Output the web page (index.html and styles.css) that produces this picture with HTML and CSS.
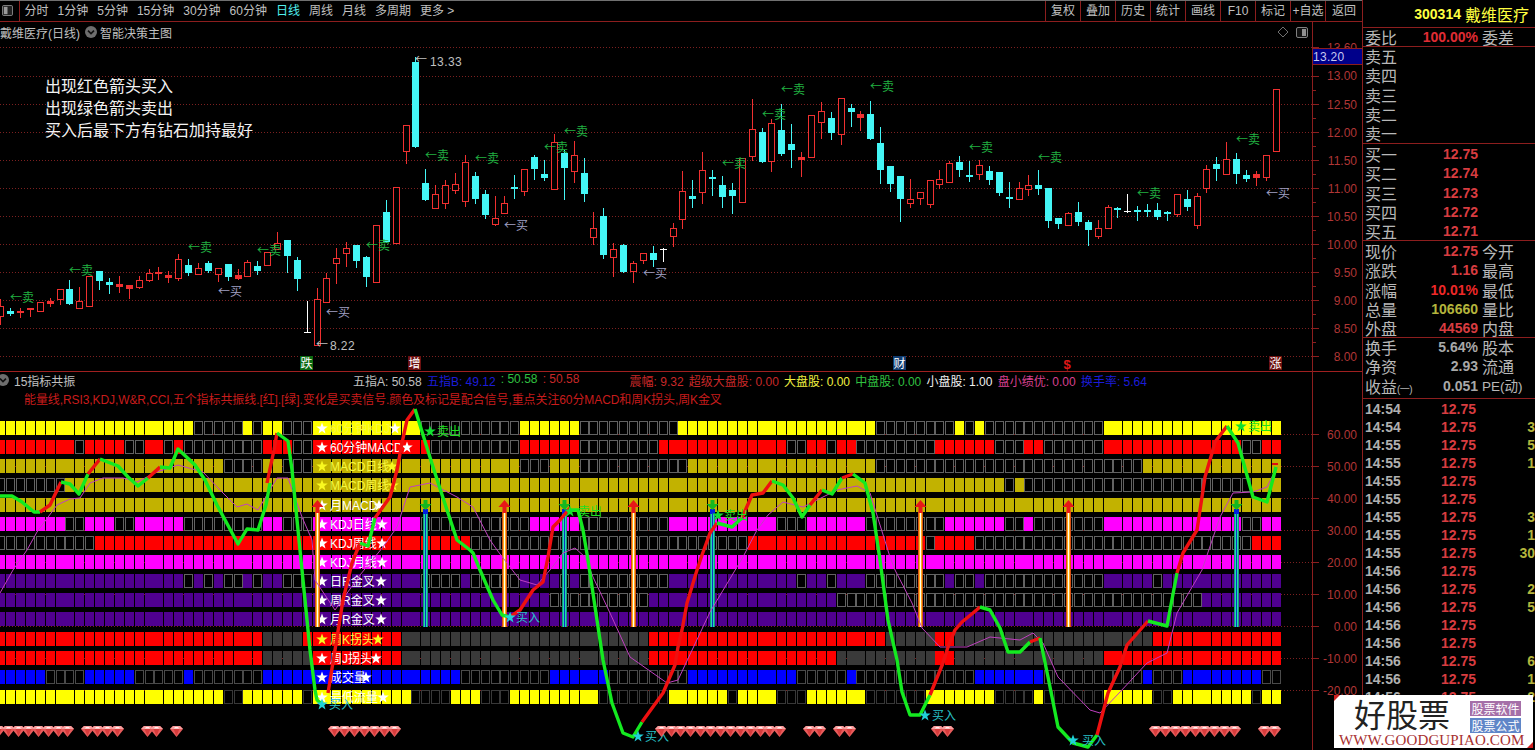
FILE: index.html
```html
<!DOCTYPE html>
<html lang="zh-CN">
<head>
<meta charset="utf-8">
<title>戴维医疗(日线)</title>
<link rel="stylesheet" href="styles.css">
</head>
<body>
<svg class="defs" width="0" height="0" aria-hidden="true">
  <symbol id="gem" viewBox="0 0 13 11">
    <polygon points="0,3 3,0 10,0 13,3 6.5,11" fill="#e85c5c"/>
    <polygon points="3,0 10,0 13,3 0,3" fill="#f8a0a0"/>
    <polygon points="3.5,3 9.5,3 6.5,10" fill="#d83c3c"/>
    <polygon points="5,1 8,1 9,2.4 4,2.4" fill="#fff0f0"/>
  </symbol>
  <symbol id="star" viewBox="0 0 24 24">
    <polygon points="12,1 15,9 23.5,9 16.5,14.5 19,23 12,18 5,23 7.5,14.5 0.5,9 9,9"/>
  </symbol>
  <symbol id="chev" viewBox="0 0 12 12">
    <circle cx="6" cy="6" r="6" fill="#6e6e6e"/>
    <path d="M3 4.6 L6 7.6 L9 4.6" fill="none" stroke="#111" stroke-width="1.6"/>
  </symbol>
</svg>
<div class="app">
  <main class="main">
    <header class="toolbar">
      <div class="tool-icon">
        <svg class="icon-win" viewBox="0 0 12 12"><rect x="0.5" y="0.5" width="11" height="11" rx="1.5" fill="#222" stroke="#8a8a8a"/><rect x="2" y="2" width="4" height="8" fill="#9a9a9a"/></svg>
      </div>
      <nav class="periods">
        <span>分时</span><span>1分钟</span><span>5分钟</span><span>15分钟</span><span>30分钟</span><span>60分钟</span>
        <span class="on">日线</span><span>周线</span><span>月线</span><span>多周期</span><span>更多 &gt;</span>
      </nav>
      <nav class="actions">
        <span>复权</span><span>叠加</span><span>历史</span><span>统计</span><span>画线</span><span>F10</span><span>标记</span><span>+自选</span><span>返回</span>
      </nav>
    </header>

    <section class="pane kpane">
      <svg id="kchart" class="canvas" viewBox="0 22 1362 350" width="1362" height="350"></svg>
      <div class="pane-title">
        <span>戴维医疗(日线)</span>
        <svg class="chev"><use href="#chev"/></svg>
        <span>智能决策主图</span>
      </div>
      <div class="note">
        <div>出现红色箭头买入</div>
        <div>出现绿色箭头卖出</div>
        <div>买入后最下方有钻石加持最好</div>
      </div>
    </section>

    <section class="pane ipane">
      <svg id="ichart" class="canvas" viewBox="0 372 1362 378" width="1362" height="378"></svg>
      <div class="ind-head">
        <div class="ind-name">
          <svg class="chev chev-cut"><use href="#chev"/></svg>
          <span>15指标共振</span>
        </div>
        <div class="ind-vals">
          <span class="v-gray">五指A: 50.58</span>
          <span class="v-blue">五指B: 49.12</span>
          <span class="v-green">: 50.58</span>
          <span class="v-red">: 50.58</span>
          <span class="v-red wide">震幅: 9.32</span>
          <span class="v-red">超级大盘股: 0.00</span>
          <span class="v-yellow">大盘股: 0.00</span>
          <span class="v-green">中盘股: 0.00</span>
          <span class="v-white">小盘股: 1.00</span>
          <span class="v-pink">盘小绩优: 0.00</span>
          <span class="v-blue">换手率: 5.64</span>
        </div>
      </div>
      <div class="ind-desc">能量线,RSI3,KDJ,W&amp;R,CCI,五个指标共振线.[红].[绿].变化是买卖信号.颜色及标记是配合信号,重点关注60分MACD和周K拐头,周K金叉</div>
    </section>
  </main>

  <aside class="side">
    <div class="sec sec-head"><span class="code">300314</span><span class="name">戴维医疗</span></div>
    <div class="sec sec-ratio row"><span>委比</span><b class="red">100.00%</b><span>委差</span></div>
    <div class="sec sec-five">
      <div class="row"><span>卖五</span></div>
      <div class="row"><span>卖四</span></div>
      <div class="row"><span>卖三</span></div>
      <div class="row"><span>卖二</span></div>
      <div class="row"><span>卖一</span></div>
    </div>
    <div class="sec sec-five sec-pad">
      <div class="row"><span>买一</span><b class="red">12.75</b></div>
      <div class="row"><span>买二</span><b class="red">12.74</b></div>
      <div class="row"><span>买三</span><b class="red">12.73</b></div>
      <div class="row"><span>买四</span><b class="red">12.72</b></div>
      <div class="row"><span>买五</span><b class="red">12.71</b></div>
    </div>
    <div class="sec sec-five sec-pad">
      <div class="row"><span>现价</span><b class="red">12.75</b><span>今开</span></div>
      <div class="row"><span>涨跌</span><b class="red">1.16</b><span>最高</span></div>
      <div class="row"><span>涨幅</span><b class="bright">10.01%</b><span>最低</span></div>
      <div class="row"><span>总量</span><b class="olive">106660</b><span>量比</span></div>
      <div class="row"><span>外盘</span><b class="red">44569</b><span>内盘</span></div>
    </div>
    <div class="sec sec-three">
      <div class="row"><span>换手</span><b class="gray">5.64%</b><span>股本</span></div>
      <div class="row"><span>净资</span><b class="gray">2.93</b><span>流通</span></div>
      <div class="row"><span>收益<small class="paren">(一)</small></span><b class="gray">0.051</b><span class="pe">PE(动)</span></div>
    </div>
    <div class="ticks">
      <div class="tick"><b class="time">14:54</b><b class="red">12.75</b><b class="olive"></b></div>
      <div class="tick"><b class="time">14:54</b><b class="red">12.75</b><b class="olive">3</b></div>
      <div class="tick"><b class="time">14:55</b><b class="red">12.75</b><b class="olive">5</b></div>
      <div class="tick"><b class="time">14:55</b><b class="red">12.75</b><b class="olive">1</b></div>
      <div class="tick"><b class="time">14:55</b><b class="red">12.75</b><b class="olive"></b></div>
      <div class="tick"><b class="time">14:55</b><b class="red">12.75</b><b class="olive"></b></div>
      <div class="tick"><b class="time">14:55</b><b class="red">12.75</b><b class="olive">3</b></div>
      <div class="tick"><b class="time">14:55</b><b class="red">12.75</b><b class="olive">1</b></div>
      <div class="tick"><b class="time">14:55</b><b class="red">12.75</b><b class="olive">30</b></div>
      <div class="tick"><b class="time">14:56</b><b class="red">12.75</b><b class="olive"></b></div>
      <div class="tick"><b class="time">14:56</b><b class="red">12.75</b><b class="olive">2</b></div>
      <div class="tick"><b class="time">14:56</b><b class="red">12.75</b><b class="olive">5</b></div>
      <div class="tick"><b class="time">14:56</b><b class="red">12.75</b><b class="olive"></b></div>
      <div class="tick"><b class="time">14:56</b><b class="red">12.75</b><b class="olive"></b></div>
      <div class="tick"><b class="time">14:56</b><b class="red">12.75</b><b class="olive">6</b></div>
      <div class="tick"><b class="time">14:56</b><b class="red">12.75</b><b class="olive">1</b></div>
      <div class="tick"><b class="time">14:56</b><b class="red">12.75</b><b class="olive">2</b></div>
    </div>
  </aside>
</div>

<div class="watermark">
  <div class="wm-top">
    <span class="wm-name">好股票</span>
    <div class="wm-tags"><span class="tag-a">股票软件</span><span class="tag-b">股票公式</span></div>
  </div>
  <div class="wm-url">WWW.GOODGUPIAO.COM</div>
</div>
<script src="app.js"></script>
</body>
</html>
```

FILE: styles.css
```css
* { box-sizing: border-box; }
html, body { margin: 0; height: 100%; background: #000; overflow: hidden; }
body {
  font-family: "Liberation Sans", "Noto Sans CJK SC", sans-serif;
  font-size: 12px;
  color: #c0c0c0;
  position: relative;
}
.defs { position: absolute; }
.app { display: flex; width: 1535px; height: 750px; }
.main { width: 1362px; display: flex; flex-direction: column; flex: none; }

.toolbar {
  height: 22px; flex: none; display: flex; align-items: stretch;
  border-top: 1px solid #707070;
  border-bottom: 1px solid #8c1e1e;
}
.tool-icon { width: 20px; border-right: 1px solid #8c1e1e; padding: 4px 0 0 2px; }
.icon-win { display: block; width: 11px; height: 11px; }
.periods { display: flex; gap: 9px; padding-left: 4.5px; align-items: center; line-height: 20px; white-space: nowrap; }
.periods .on { color: #50f0f0; }
.actions { margin-left: auto; display: flex; }
.actions span {
  width: 35px; border-left: 1px solid #8c1e1e;
  text-align: center; line-height: 20px; white-space: nowrap;
}
.actions span:last-child { width: 37px; }

.pane { position: relative; flex: none; overflow: hidden; }
.kpane { height: 350px; }
.ipane { height: 378px; }
.canvas { position: absolute; left: 0; top: 0; display: block; }
.pane-title, .ind-head, .ind-desc { position: relative; }

.pane-title { display: flex; align-items: center; height: 20px; }
.chev { width: 12px; height: 12px; margin: 0 3px 0 5px; flex: none; }
.note {
  position: absolute; left: 45px; top: 52px;
  font-family: "Noto Sans CJK SC", sans-serif;
  font-size: 16px; line-height: 22px; color: #f2f2f2;
}
.ind-head { display: flex; height: 16px; align-items: center; }
.ind-name { display: flex; align-items: center; width: 353px; }
.chev-cut { margin: 0 5px 0 -3px; }
.ind-vals { display: flex; gap: 5.2px; white-space: nowrap; }
.ind-vals .wide { margin-left: 45px; }
.v-gray { color: #c0c0c0; }
.v-blue { color: #1c1cd8; }
.v-green { color: #30c040; }
.v-red { color: #c82828; }
.v-yellow { color: #f0f040; }
.v-white { color: #f0f0f0; }
.v-pink { color: #d84090; }
.ind-desc { padding-left: 24px; margin-top: 4px; line-height: 16px; color: #c81c1c; white-space: nowrap; letter-spacing: -0.09px; }

/* chart text */
.ax { font: 12px "Liberation Sans", sans-serif; fill: #b03636; text-anchor: end; }
.ax-cur { font: 12px "Liberation Sans", sans-serif; fill: #c8c8f0; letter-spacing: 0.3px; }
.mk { font: 12px "Noto Sans CJK SC", sans-serif; }
.mk-sell { fill: #20b040; }
.mk-buy { fill: #a0a0c4; }
.mk-gray { fill: #c0c0c0; }
.mk-val { font: 12px "Liberation Sans", sans-serif; fill: #c0c0c0; letter-spacing: 0.4px; }
.mk-white { fill: #fff; text-anchor: middle; }
.mk-dollar { font: bold 13px "Liberation Sans", sans-serif; fill: #e01818; text-anchor: middle; }
.sig-sell { fill: #20e020; }
.sig-buy { fill: #28c0c8; }
.lab { font: 12px "Liberation Sans", "Noto Sans CJK SC", sans-serif; }
.lab-w { fill: #fff; }
.lab-y { fill: #f8f840; }
.star-w { fill: #fff; }
.star-y { fill: #f8f820; }
.star-g { fill: #10e030; }
.star-c { fill: #20d0d8; }

/* right panel */
.side { width: 173px; flex: none; border-left: 1px solid #8c1e1e; height: 750px; overflow: hidden; }
.sec { border-bottom: 1px solid #8c1e1e; }
.sec-head {
  height: 28px; display: flex; justify-content: flex-end; align-items: center;
  gap: 4px; padding-right: 6px; color: #ffff40;
}
.code { font-size: 14px; font-weight: bold; }
.name { font-family: "Noto Sans CJK SC", sans-serif; font-size: 16px; }
.sec-ratio { height: 20px; line-height: 18px; }
.sec-five { height: 97px; }
.sec-pad { padding-top: 1px; }
.sec-three { height: 61px; }
.row {
  display: grid; grid-template-columns: 40px 73px 4px auto;
  padding-left: 2px; height: 19.2px; line-height: 19.2px;
  font-family: "Noto Sans CJK SC", sans-serif; font-size: 16px; color: #b8b8b8; white-space: nowrap;
}
.row > b {
  grid-column: 2; text-align: right; font: bold 14px/19.2px "Liberation Sans", sans-serif;
}
.row > span:nth-child(3) { grid-column: 4; }
.paren { font-family: "Liberation Sans", "Noto Sans CJK SC", sans-serif; font-size: 10px; letter-spacing: -0.6px; }
.pe { font-family: "Liberation Sans", "Noto Sans CJK SC", sans-serif; font-size: 13.5px; }
.red { color: #d83c40; }
.bright { color: #ee2828; }
.olive { color: #b4b43c; }
.gray { color: #a8a8a8; }
.sec-ratio .red { color: #e02c34; }
.ticks { padding-top: 1px; }
.tick {
  display: grid; grid-template-columns: 40px 71px 1fr;
  padding-left: 2px; height: 18px;
  font: bold 14px/18px "Liberation Sans", sans-serif;
}
.tick .time { color: #b0b0b0; }
.tick .red { text-align: right; }
.tick .olive { text-align: right; }

/* watermark */
.watermark {
  position: absolute; left: 1334px; top: 695px; width: 199px; height: 53px;
  background: #fff; overflow: hidden; padding: 0 6px;
}
.watermark::before {
  content: ""; position: absolute; left: 0; top: 0;
  border-top: 6px solid #d02020; border-right: 6px solid transparent;
}
.watermark::after {
  content: ""; position: absolute; right: 0; bottom: 0;
  border-bottom: 6px solid #d02020; border-left: 6px solid transparent;
}
.wm-top { display: flex; height: 38px; padding-left: 14px; }
.wm-name { font-family: "Noto Sans CJK SC", sans-serif; font-size: 32px; line-height: 36px; color: #222; width: 116px; white-space: nowrap; }
.wm-tags { display: flex; flex-direction: column; gap: 2px; padding-top: 6px; }
.wm-tags span {
  width: 51px; height: 15px; line-height: 15px; text-align: center;
  font-family: "Noto Sans CJK SC", sans-serif; font-size: 12px; color: #fff; white-space: nowrap;
}
.tag-a { background: #a56fa8; }
.tag-b { background: #5f86c8; }
.wm-url { font: 15px/14px "Liberation Serif", serif; color: #a83030; letter-spacing: 0.15px; white-space: nowrap; margin-left: -1px; }
```

FILE: app.js
```js
(function () {
  // x centre of each of the 130 bars (the chart steps 10px, 9px at these indexes)
  var nine = [7, 16, 25, 33, 42, 51, 60, 69, 78, 87, 95, 104, 113, 122];
  var cx = [0];
  for (var i = 1; i < 130; i++) cx.push(cx[i - 1] + (nine.indexOf(i) >= 0 ? 9 : 10));

  // [wick top, body top, body bottom, wick bottom, kind] in page pixels
  var bars = [
    [299,306,316,324,'r'],[308,311,314,315,'c'],[308,311,312,317,'r'],[308,308,309,316,'r'],[302,302,311,311,'r'],
    [298,301,303,306,'r'],[289,289,299,304,'r'],[280,289,304,304,'c'],[287,301,308,308,'r'],[276,276,306,306,'r'],
    [271,271,281,289,'c'],[278,282,285,293,'c'],[276,284,286,292,'r'],[285,285,288,298,'r'],[276,280,287,288,'r'],
    [269,273,280,281,'r'],[267,272,273,279,'r'],[271,275,277,282,'r'],[254,259,278,280,'r'],[259,265,273,275,'c'],
    [263,268,274,274,'r'],[261,263,271,272,'c'],[268,268,274,281,'r'],[264,264,277,280,'c'],[269,275,278,279,'r'],
    [260,262,276,276,'r'],[261,266,271,274,'c'],[252,252,265,265,'r'],[232,243,249,249,'r'],[240,240,256,272,'c'],
    [257,260,279,290,'c'],[301,332,332,332,'w'],[288,299,345,345,'r'],[273,278,302,302,'r'],[248,258,263,283,'r'],
    [242,248,253,266,'r'],[245,245,261,267,'c'],[256,257,277,286,'c'],[225,225,282,282,'r'],[200,212,242,242,'c'],
    [187,187,243,243,'r'],[125,125,151,163,'r'],[57,62,147,147,'c'],[169,183,200,200,'c'],[185,194,208,208,'r'],
    [180,185,203,208,'r'],[173,184,190,193,'r'],[155,162,201,206,'r'],[172,176,199,203,'c'],[190,194,215,218,'c'],
    [196,218,224,225,'r'],[196,203,213,213,'r'],[175,187,189,198,'c'],[169,169,191,195,'r'],[155,157,169,179,'c'],
    [160,174,178,180,'c'],[134,142,189,189,'r'],[150,153,168,199,'c'],[141,155,171,182,'r'],[158,173,194,201,'c'],
    [212,228,237,244,'r'],[208,216,255,258,'c'],[243,249,257,276,'r'],[244,245,272,272,'c'],[261,263,271,282,'r'],
    [253,253,260,263,'r'],[246,253,260,266,'c'],[248,249,249,261,'w'],[223,228,236,246,'r'],[171,191,219,228,'r'],
    [180,196,199,207,'c'],[152,170,192,203,'r'],[170,177,179,195,'c'],[176,185,197,207,'c'],[183,190,196,213,'c'],
    [158,158,202,202,'r'],[99,129,156,160,'r'],[128,132,162,162,'c'],[119,123,161,171,'r'],[104,130,154,155,'c'],
    [124,144,150,167,'c'],[152,157,159,176,'r'],[115,115,157,157,'r'],[102,111,122,138,'r'],[112,118,133,139,'c'],
    [98,98,134,144,'r'],[104,108,112,126,'c'],[111,114,117,130,'r'],[101,114,139,139,'c'],[127,143,170,183,'c'],
    [166,166,184,191,'c'],[176,176,199,221,'c'],[179,199,203,207,'r'],[192,192,198,204,'r'],[180,180,204,207,'r'],
    [170,179,184,188,'r'],[161,163,182,182,'r'],[156,162,170,176,'c'],[161,175,177,181,'c'],[160,165,174,179,'r'],
    [166,171,180,184,'c'],[172,172,193,195,'c'],[182,197,199,207,'c'],[182,188,199,199,'r'],[175,185,189,195,'r'],
    [170,185,189,194,'c'],[188,188,221,227,'c'],[218,218,224,228,'c'],[212,213,225,225,'r'],[202,212,222,225,'c'],
    [220,222,230,245,'c'],[220,228,236,238,'r'],[205,207,228,228,'r'],[207,208,210,217,'c'],[194,211,211,212,'w'],
    [206,210,212,220,'c'],[204,210,211,216,'c'],[203,210,217,219,'c'],[211,212,214,220,'c'],[194,194,214,216,'r'],
    [190,199,207,210,'c'],[193,196,225,228,'r'],[165,169,188,192,'r'],[157,164,169,180,'c'],[142,159,174,174,'r'],
    [153,159,174,183,'c'],[170,175,179,181,'c'],[171,174,177,185,'r'],[155,155,177,180,'r'],[89,89,151,151,'r']
  ];

  var kLevels = [47, 75.5, 104, 132, 160, 188, 216, 244, 272, 300, 328, 356];
  var kLabels = ['13.60','13.00','12.50','12.00','11.50','11.00','10.50','10.00','9.50','9.00','8.50','8.00'];
  var sells = [[11,298],[70,271],[189,248],[258,251],[367,246],[426,156],[476,159],[545,148],[565,132],[723,164],[763,115],[782,90],[871,87],[970,148],[1039,158],[1138,194],[1237,140]];
  var buys = [[219,292],[327,313],[505,226],[644,274],[1267,194]];

  function line(x1, y1, x2, y2, cls, extra) {
    return '<line x1="' + x1 + '" y1="' + y1 + '" x2="' + x2 + '" y2="' + y2 + '" stroke="' + cls + '"' + (extra || '') + '/>';
  }
  function rect(x, y, w, h, fill, extra) {
    return '<rect x="' + x + '" y="' + y + '" width="' + w + '" height="' + h + '" fill="' + fill + '"' + (extra || '') + '/>';
  }
  function text(x, y, cls, s) {
    return '<text x="' + x + '" y="' + y + '" class="' + cls + '">' + s + '</text>';
  }
  var DOT = ' stroke-dasharray="1 2"';
  var AXIS = '#8c1e1e', GRID = '#7c2020', CRISP = ' shape-rendering="crispEdges"';

  // ---------- price pane ----------
  var k = '';
  kLevels.forEach(function (y) { k += line(0, y + 0.5, 1312, y + 0.5, GRID, DOT + CRISP); });
  bars.forEach(function (b, n) {
    var x = cx[n], c = b[4];
    var col = c === 'c' ? '#44f6f6' : c === 'w' ? '#ffffff' : '#f03030';
    k += rect(x, b[0], 1, b[3] - b[0] + 1, col, CRISP);
    if (c === 'c') k += rect(x - 3, b[1], 7, Math.max(b[2] - b[1], 2), col, CRISP);
    else if (c === 'w') k += rect(x - 3, b[1], 7, 1, col, CRISP);
    else if (b[2] - b[1] <= 3) k += rect(x - 3, b[1], 7, Math.max(b[2] - b[1], 1) + 1, col, CRISP);
    else k += rect(x - 3, b[1], 7, b[2] - b[1] + 1, col, CRISP) + rect(x - 2, b[1] + 1, 5, b[2] - b[1] - 1, '#000', CRISP);
  });
  sells.forEach(function (p) { k += text(p[0] - 1, p[1] + 4, 'mk mk-sell', '←卖'); });
  buys.forEach(function (p) { k += text(p[0] - 1, p[1] + 4, 'mk mk-buy', '←买'); });
  k += text(415, 64, 'mk mk-gray', '←') + text(430, 66, 'mk-val', '13.33');
  k += text(316, 349, 'mk mk-gray', '←') + text(330, 350, 'mk-val', '8.22');
  // day markers
  k += rect(300, 356, 13, 14, '#0c6a10') + text(306.5, 367.5, 'mk mk-white', '跌');
  k += rect(408, 356, 13, 14, '#6c1010') + text(414.5, 367.5, 'mk mk-white', '增');
  k += rect(893, 356, 13, 14, '#103c70') + text(899.5, 367.5, 'mk mk-white', '财');
  k += text(1067, 369, 'mk-dollar', '$');
  k += rect(1269, 356, 13, 14, '#6c1010') + text(1275.5, 367.5, 'mk mk-white', '涨');
  // title-bar glyphs
  k += '<path d="M1283 27 L1288 32 L1283 37 L1278 32 Z" fill="none" stroke="#707070"/>';
  k += '<rect x="1296.5" y="27.5" width="11" height="10" rx="1.5" fill="#111" stroke="#808080"/><rect x="1302" y="29" width="4" height="7" fill="#909090"/>';
  // axis
  k += line(0, 371.5, 1362, 371.5, '#a02020', CRISP);
  k += line(1312.5, 22, 1312.5, 372, AXIS, CRISP);
  kLevels.forEach(function (y, n) {
    k += line(1312, y + 0.5, 1319, y + 0.5, AXIS, CRISP);
    if (n < kLevels.length - 1) k += line(1312, y + 14.5, 1316, y + 14.5, AXIS, CRISP);
    k += text(1357, y + 4.5, 'ax', kLabels[n]);
  });
  k += rect(1313, 48, 49, 17, '#00008a') + line(1312, 48.5, 1362, 48.5, AXIS, CRISP) + line(1312, 64.5, 1362, 64.5, AXIS, CRISP);
  k += text(1313, 60.5, 'ax-cur', '13.20');
  document.getElementById('kchart').innerHTML = k;

  // ---------- indicator pane ----------
  var rowTops = [421, 440, 459, 478, 498, 517, 536, 555, 574, 593, 612, 632, 651, 670, 690];
  var Y = '#ffff00', R = '#ff0000', O = '#c2b200', M = '#ff00ff', P = '#500090', B = '#0000ff';
  var rows = [
    [Y, [[0,19],[25,25],[27,28],[32,42],[53,58],[69,88],[97,97],[99,99],[112,129]]],
    [R, [[0,7],[9,12],[15,16],[18,18],[27,29],[32,43],[53,58],[67,79],[82,83],[85,86],[95,100],[104,105],[112,125],[128,129]]],
    [O, [[0,22],[27,28],[32,52],[56,58],[70,88],[116,129]]],
    [O, [[7,101],[103,103],[127,129]]],
    [O, [[0,129]]],
    [M, [[0,6],[9,11],[14,18],[27,28],[32,42],[54,58],[68,78],[82,87],[96,101],[104,104],[112,125],[128,129]]],
    [R, [[10,47],[76,93],[95,98],[127,129]]],
    [M, [[0,129]]],
    [P, [[0,18],[20,20],[22,22],[25,25],[27,28],[32,42],[47,47],[53,56],[58,58],[68,80],[82,83],[85,87],[96,96],[99,99],[112,116],[118,129]]],
    [P, [[0,55],[66,84],[122,129]]],
    [P, [[0,129]]],
    [R, [[0,26],[31,40],[66,89],[95,96],[117,129]], 'gray'],
    [R, [[0,26],[32,40],[66,84],[95,96],[112,129]], 'gray'],
    [B, [[0,4],[9,13],[19,19],[27,46],[56,61],[70,80],[86,86],[99,105],[116,116],[120,127]], 'dim'],
    [Y, [[0,22],[25,30],[32,41],[46,48],[52,60],[68,73],[75,78],[82,87],[94,100],[105,105],[112,116],[119,126],[128,129]], 'dim2']
  ];
  var s = '';
  [434, 466, 498, 530, 562, 594, 626, 658, 690].forEach(function (y, n) {
    s += line(0, y + 0.5, 1312, y + 0.5, GRID, DOT + CRISP);
    s += line(1312, y + 0.5, 1319, y + 0.5, AXIS, CRISP);
    s += text(1357, y + 4.5, 'ax', ['60.00','50.00','40.00','30.00','20.00','10.00','0.00','-10.00','-20.00'][n]);
  });
  rows.forEach(function (row, r) {
    var top = rowTops[r];
    for (var c = 0; c < 130; c++) {
      var on = row[1].some(function (a) { return c >= a[0] && c <= a[1]; });
      var x = cx[c] - 4, w = 9;
      if (on) s += rect(x, top, w, 14, row[0], CRISP);
      else if (row[2] === 'gray') s += rect(x, top, w, 14, '#3a3a3a', CRISP);
      else {
        var st = row[2] === 'dim' ? '#4a4a4a' : row[2] === 'dim2' ? '#383838' : '#626262';
        s += '<rect x="' + (x + 0.5) + '" y="' + (top + 0.5) + '" width="8" height="13" fill="#000" stroke="' + st + '"' + CRISP + '/>';
      }
    }
  });

  // row captions
  var caps = [['60分钟KDJ','w','y',395],['60分钟MACD','w','w',407],['MACD日线','y','y',392],['MACD周线','y','y',393],['月MACD','w','w',379],
    ['KDJ日线','w','w',382],['KDJ周线','w','w',382],['KDJ月线','w','w',382],['日R金叉','w','w',381],['周R金叉','w','w',381],['月R金叉','w','w',381],
    ['周K拐头','y','y',378],['周J拐头','w','w',376],['成交量','w','w',366],['最低流量','w','w',383]];
  function star(x, y, size, cls) {
    return '<use href="#star" x="' + (x - size / 2) + '" y="' + (y - size / 2) + '" width="' + size + '" height="' + size + '" class="' + cls + '"/>';
  }
  caps.forEach(function (c, r) {
    var mid = rowTops[r] + 7;
    s += star(322, mid, 12, 'star-' + c[1]);
    s += text(330, mid + 4.5, 'lab lab-' + c[2], c[0]);
    s += star(c[3], mid, 12, 'star-' + c[1]);
  });

  // arrows
  [317, 504, 633, 920, 1068].forEach(function (x) {
    s += rect(x - 2, 512, 5, 115, '#d85010', CRISP) + rect(x - 1, 512, 3, 115, '#ffb020', CRISP) + rect(x, 512, 1, 115, '#fffff0', CRISP);
    s += '<polygon points="' + (x + 0.5) + ',500 ' + (x + 6.5) + ',507 ' + (x + 2.5) + ',507 ' + (x + 2.5) + ',513 ' + (x - 1.5) + ',513 ' + (x - 1.5) + ',507 ' + (x - 5.5) + ',507" fill="#e81818"/>';
  });
  [425, 564, 712, 1236].forEach(function (x) {
    s += rect(x - 2, 512, 5, 115, '#10a070', CRISP) + rect(x - 1, 512, 3, 115, '#20d8b8', CRISP) + rect(x, 512, 1, 115, '#1030c0', CRISP);
    s += rect(x - 2, 509, 5, 5, '#0020e0', CRISP);
    s += '<polygon points="' + (x + 0.5) + ',510 ' + (x + 6.5) + ',504 ' + (x + 2.5) + ',504 ' + (x + 2.5) + ',500 ' + (x - 1.5) + ',500 ' + (x - 1.5) + ',504 ' + (x - 5.5) + ',504" fill="#14b820"/>';
  });

  // thin line
  var thin = [[0,593],[13,570],[27,550],[37,532],[57,505],[70,499],[80,498],[90,483],[103,478],[123,478],[137,482],[157,472],[178,465],[203,472],[220,490],[237,507],[247,504],[258,510],[277,478],[288,478],[302,517],[312,540],[315,580],[335,610],[360,575],[383,547],[397,527],[410,487],[430,483],[457,497],[473,507],[490,540],[497,550],[510,567],[520,580],[537,585],[550,570],[563,553],[575,548],[585,557],[593,577],[610,613],[630,657],[667,683],[678,680],[710,612],[737,567],[743,557],[757,530],[768,515],[783,502],[803,507],[837,490],[857,486],[870,493],[890,557],[895,570],[912,603],[922,628],[940,647],[967,647],[990,637],[1020,640],[1033,633],[1043,643],[1058,677],[1090,710],[1100,713],[1120,692],[1147,663],[1167,653],[1177,613],[1202,570],[1220,517],[1233,493],[1253,492],[1267,487],[1277,467]];
  s += '<polyline points="' + thin.join(' ') + '" fill="none" stroke="#c040c0" stroke-width="1"/>';

  // thick line: alternating green and red pieces
  var GRN = '#14ea20', RED = '#ee1010';
  var thick = [
    [GRN,[[0,496],[12,496],[22,502],[34,512],[40,512]]],
    [RED,[[40,512],[50,505],[61,482]]],
    [GRN,[[61,482],[70,484],[79,494],[88,474]]],
    [RED,[[88,474],[100,459]]],
    [GRN,[[100,459],[118,466],[128,477],[138,486],[148,478]]],
    [RED,[[148,478],[160,467]]],
    [GRN,[[160,467],[170,468],[178,449],[195,465],[205,480],[217,505],[238,544],[247,529],[258,530],[266,505],[270,483]]],
    [RED,[[267,483],[274,450],[277,433]]],
    [GRN,[[277,433],[288,441],[292,470],[302,570],[306,610],[310,650],[315,690],[317,700],[322,704]]],
    [RED,[[328,693],[335,650],[343,600],[352,563],[360,543]]],
    [GRN,[[360,543],[368,546],[375,518]]],
    [RED,[[375,518],[390,497],[397,470],[402,443],[407,420],[415,409]]],
    [GRN,[[415,409],[433,467],[447,510],[457,540],[470,550],[473,553],[480,570],[493,600],[502,615],[510,617]]],
    [RED,[[510,617],[520,610],[533,590],[543,582],[548,557],[553,527],[560,520],[570,508]]],
    [GRN,[[570,510],[578,510],[583,530],[588,560],[597,620],[603,660],[612,703],[623,733],[633,737],[642,722]]],
    [RED,[[642,722],[663,693],[675,665],[678,647],[682,630],[687,603],[697,570],[702,555],[710,533],[717,523]]],
    [GRN,[[717,523],[732,527],[742,518]]],
    [RED,[[742,518],[752,495],[763,493],[772,481]]],
    [GRN,[[772,481],[783,485],[793,498],[802,517],[810,505]]],
    [RED,[[810,505],[822,490]]],
    [GRN,[[822,490],[832,494],[842,478]]],
    [RED,[[842,478],[853,474]]],
    [GRN,[[853,474],[865,483],[873,513],[880,560],[888,620],[897,660],[902,692],[910,715],[920,715],[930,695]]],
    [RED,[[930,695],[943,663],[948,647],[955,630],[962,622],[973,613],[980,607]]],
    [GRN,[[980,607],[990,610],[1000,628],[1008,652],[1020,652],[1030,642]]],
    [RED,[[1030,642],[1040,638]]],
    [GRN,[[1040,638],[1048,677],[1058,727],[1073,743],[1088,747],[1097,735]]],
    [RED,[[1097,735],[1108,693],[1120,667],[1127,645],[1148,621]]],
    [GRN,[[1148,621],[1167,626],[1177,573]]],
    [RED,[[1177,573],[1183,553],[1197,530],[1205,477],[1212,453],[1215,442],[1227,426]]],
    [GRN,[[1227,426],[1238,443],[1253,497],[1267,502],[1276,467]]]
  ];
  thick.forEach(function (t) {
    s += '<polyline points="' + t[1].join(' ') + '" fill="none" stroke="' + t[0] + '" stroke-width="3.4" stroke-linejoin="round"/>';
  });
  s += rect(1272, 463, 6, 2, '#e01010', CRISP);

  // signals
  [[430,431,437],[570,511,578],[718,515,724],[1241,426,1248]].forEach(function (p) {
    s += star(p[0], p[1], 12, 'star-g') + text(p[2], p[1] + 4.5, 'mk sig-sell', '卖出');
  });
  [[322,704,329],[510,617,516],[638,736,645],[925,715,932],[1073,740,1082]].forEach(function (p) {
    s += star(p[0], p[1], 12, 'star-c') + text(p[2], p[1] + 4.5, 'mk sig-buy', '买入');
  });

  // diamonds
  var gems = [0,1,2,3,4,5,6,7,9,10,11,12,15,16,18,34,35,36,37,38,39,40];
  for (var g = 67; g <= 79; g++) gems.push(g);
  gems.push(82,83,85,86,95,96);
  for (g = 117; g <= 125; g++) gems.push(g);
  gems.push(128,129);
  gems.forEach(function (n) {
    s += '<use href="#gem" x="' + (cx[n] - 8) + '" y="726" width="13" height="11"/>';
  });

  s += line(1312.5, 372, 1312.5, 750, AXIS, CRISP);
  document.getElementById('ichart').innerHTML = s;
})();
```
